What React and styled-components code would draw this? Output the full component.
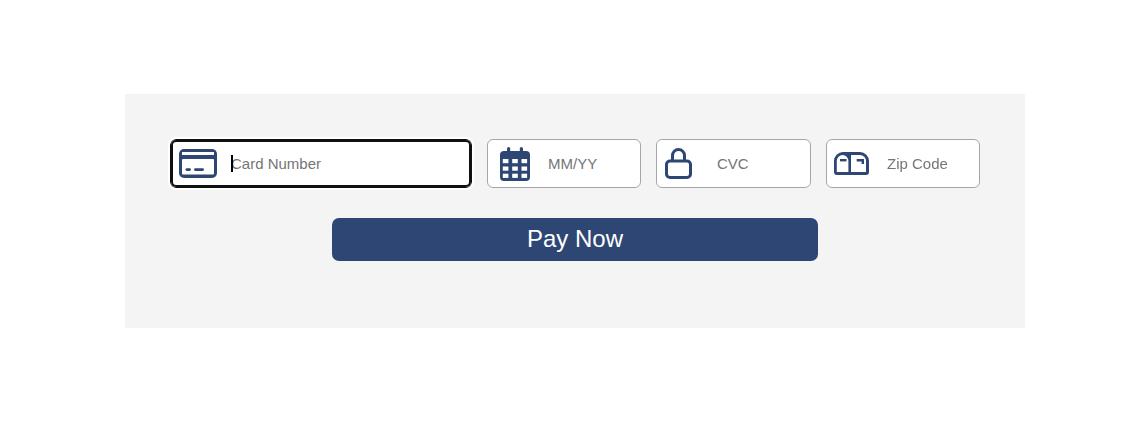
import styled, { createGlobalStyle } from 'styled-components';

const GlobalStyle = createGlobalStyle`
    * {
        box-sizing: border-box;
    }

    body {
        margin: 0;
        background: #FFFFFF;
        font-family: "Liberation Sans", Arial, sans-serif;
    }
`

const NAVY = '#2E4674';

function CardIcon() {
    return (
        <svg width="38" height="29" viewBox="0 0 38 29">
            <rect width="38" height="29" rx="5" fill={NAVY} />
            <rect x="3" y="3" width="32" height="3" fill="#FFFFFF" />
            <rect x="3" y="10" width="32" height="15.5" rx="1" fill="#FFFFFF" />
            <rect x="6.5" y="19.2" width="5.5" height="2.8" rx="1.4" fill={NAVY} />
            <rect x="15" y="19.2" width="10" height="2.8" rx="1.4" fill={NAVY} />
        </svg>
    );
}

function CalendarIcon() {
    const cells = [];
    [12, 19.5, 26.7].forEach((y) => {
        [2.8, 12.2, 21.5].forEach((x) => {
            cells.push(<rect key={`${x}-${y}`} x={x} y={y} width="5.6" height="4.2" fill="#FFFFFF" />);
        });
    });

    return (
        <svg width="30" height="34" viewBox="0 0 30 34">
            <rect x="7" y="0" width="3.2" height="8" rx="1.6" fill={NAVY} />
            <rect x="19.8" y="0" width="3.2" height="8" rx="1.6" fill={NAVY} />
            <rect x="0" y="4" width="30" height="30" rx="4" fill={NAVY} />
            {cells}
        </svg>
    );
}

function LockIcon() {
    return (
        <svg width="27" height="31" viewBox="0 0 27 31" fill="none" stroke={NAVY} strokeWidth="3">
            <path d="M7.5 13V7.5a6 6 0 0 1 12 0V13" />
            <rect x="1.5" y="13" width="24" height="16.5" rx="3.5" fill="#FFFFFF" />
        </svg>
    );
}

function MailboxIcon() {
    return (
        <svg width="35" height="23" viewBox="0 0 35 23">
            <path d="M0 20V9a9 9 0 0 1 9-9h17a9 9 0 0 1 9 9v11a3 3 0 0 1-3 3H3a3 3 0 0 1-3-3z" fill={NAVY} />
            <path d="M2.8 20V8.8a5.8 5.8 0 0 1 11.6 0V20z" fill="#FFFFFF" />
            <path d="M17 20V3h9a6 6 0 0 1 6 6v11z" fill="#FFFFFF" />
            <rect x="6" y="7" width="6.5" height="2.4" fill={NAVY} />
            <path d="M22.7 7H30v5h-2.4V9.5h-4.9z" fill={NAVY} />
        </svg>
    );
}

export default function App() {
    return (
        <>
            <GlobalStyle />
            <Page>
                <Panel>
                    <Fields>
                        <Field>
                            <IconSlot $left={9}><CardIcon /></IconSlot>
                            <Input placeholder="Card Number" autoFocus />
                            <Caret />
                        </Field>
                        <Field>
                            <IconSlot $left={13}><CalendarIcon /></IconSlot>
                            <Input placeholder="MM/YY" />
                        </Field>
                        <Field>
                            <IconSlot $left={9}><LockIcon /></IconSlot>
                            <Input placeholder="CVC" />
                        </Field>
                        <Field>
                            <IconSlot $left={8}><MailboxIcon /></IconSlot>
                            <Input placeholder="Zip Code" />
                        </Field>
                    </Fields>
                    <PayButton>Pay Now</PayButton>
                </Panel>
            </Page>
        </>
    );
}

const Page = styled.div`
    width: 100%;
    height: 436px;
    padding: 94px 0 0 125px;
    display: flex;
    align-items: flex-start;
`

const Panel = styled.div`
    width: 900px;
    height: 234px;
    padding: 45px;
    background: #F4F4F4;
    display: flex;
    flex-direction: column;
    align-items: center;
    gap: 30px;
`

const Fields = styled.div`
    width: 100%;
    display: grid;
    grid-template-columns: 302px 154px 155px 154px;
    gap: 15px;
`

const Field = styled.div`
    position: relative;
    height: 49px;
`

const IconSlot = styled.span`
    position: absolute;
    top: 0;
    bottom: 0;
    left: ${(props) => props.$left}px;
    display: flex;
    align-items: center;
    pointer-events: none;
`

const Caret = styled.span`
    position: absolute;
    top: 16px;
    left: 61px;
    width: 2px;
    height: 17px;
    background: #000000;
`

const Input = styled.input`
    width: 100%;
    height: 100%;
    padding: 0 10px 0 60px;
    background: #FFFFFF;
    border: 1px solid #A6A6A6;
    border-radius: 6px;
    color: #333333;
    caret-color: transparent;
    font-family: "Liberation Sans", Arial, sans-serif;
    font-size: 15px;

    &::placeholder {
        color: #757575;
    }

    &:focus {
        border-color: #101010;
        box-shadow: inset 0 0 0 2px #101010;
        outline: 2px solid #FFFFFF;
    }
`

const PayButton = styled.button`
    width: 486px;
    height: 43px;
    padding: 0 0 2px;
    background: #2E4674;
    border: none;
    border-radius: 7px;
    color: #FFFFFF;
    font-family: "Liberation Sans", Arial, sans-serif;
    font-size: 24px;
`
